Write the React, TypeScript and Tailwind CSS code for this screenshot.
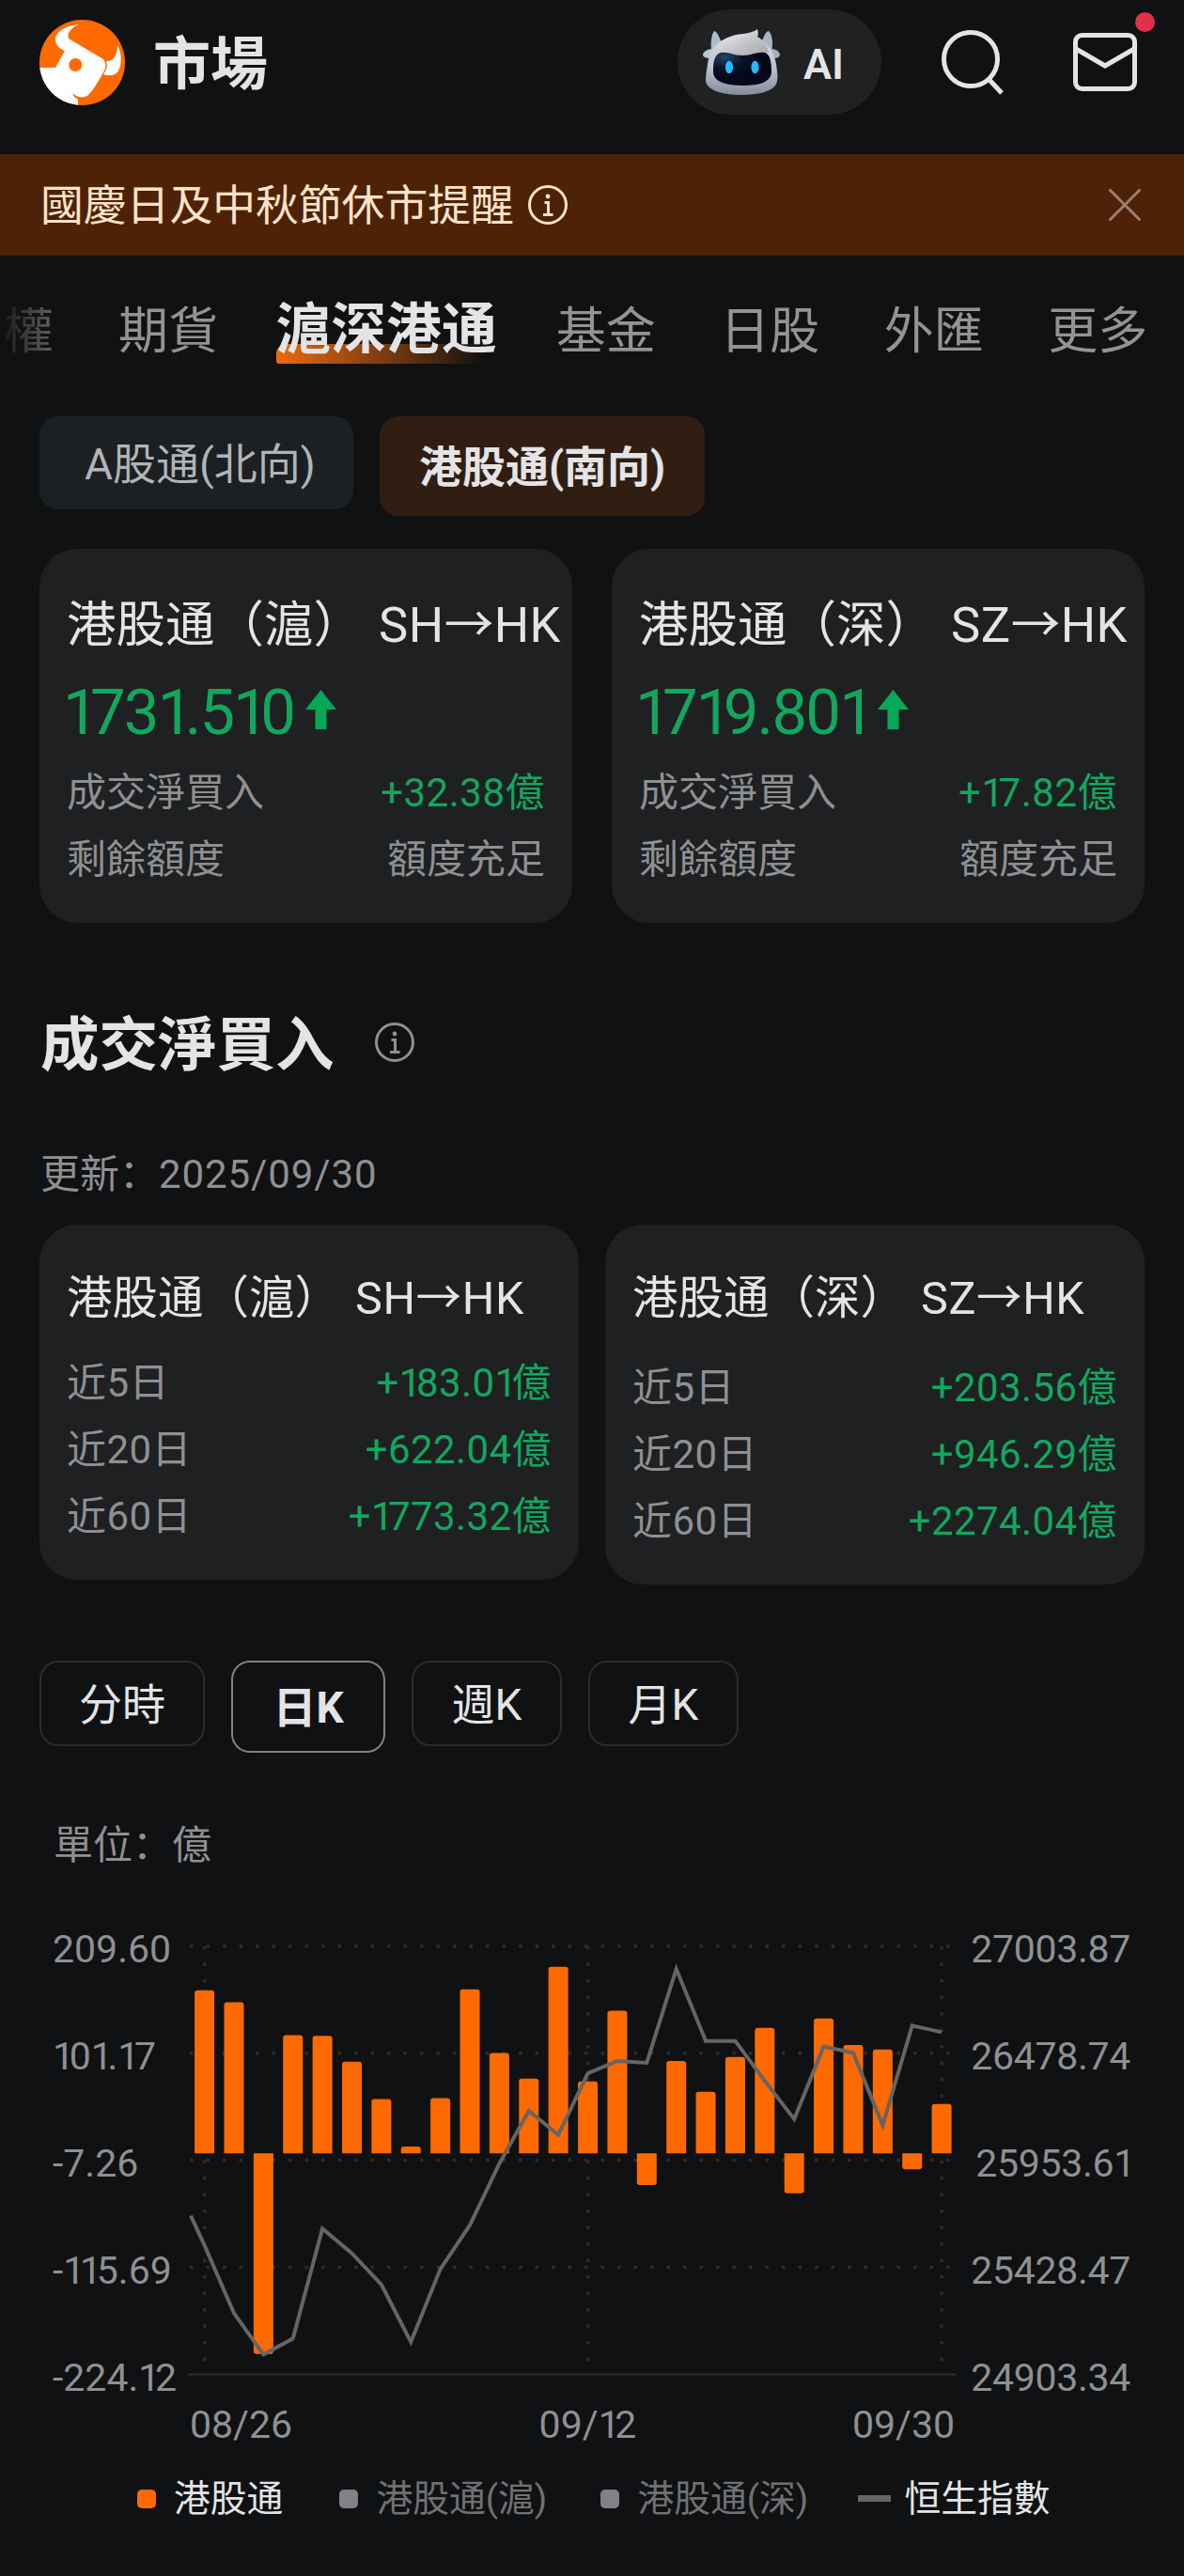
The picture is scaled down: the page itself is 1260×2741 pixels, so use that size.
import clsx from "clsx"

const tabs = ["期貨", "滬深港通", "基金", "日股", "外匯", "更多"]

const quotaCards = [
  { name: "港股通（滬）", route: "SH→HK", price: "1731.510", net: "+32.38億", quota: "額度充足" },
  { name: "港股通（深）", route: "SZ→HK", price: "1719.801", net: "+17.82億", quota: "額度充足" },
]

const netCards = [
  {
    name: "港股通（滬）",
    route: "SH→HK",
    rows: [
      ["近5日", "+183.01億"],
      ["近20日", "+622.04億"],
      ["近60日", "+1773.32億"],
    ],
  },
  {
    name: "港股通（深）",
    route: "SZ→HK",
    rows: [
      ["近5日", "+203.56億"],
      ["近20日", "+946.29億"],
      ["近60日", "+2274.04億"],
    ],
  },
]

const periods = [
  { label: "分時", width: "w-[176px]" },
  { label: "日K", width: "w-[164px]" },
  { label: "週K", width: "w-[160px]" },
  { label: "月K", width: "w-[160px]" },
]

const leftAxis = ["209.60", "101.17", "-7.26", "-115.69", "-224.12"]
const rightAxis = ["27003.87", "26478.74", "25953.61", "25428.47", "24903.34"]

const flows = [
  165.1, 153.1, -203.1, 119.7, 119, 92.9, 54.9, 7, 56, 166.1, 101.7, 75.7, 189, 72.9, 144.3, -32, 93.6, 62.3, 97.5,
  127.1, -40.5, 136.6, 109.8, 105.2, -16.2, 50,
]

const hsi = [
  25537.6, 25205.2, 25002.3, 25080.7, 25619.5, 25498.4, 25345, 25063.7, 25421.7, 25636.5, 25938.3, 26197.5, 26079.8,
  26381.6, 26441.3, 26432.7, 26893.1, 26540.1, 26540.1, 26344.1, 26156.5, 26512.9, 26482.2, 26125.8, 26615.2, 26582.8,
]

// Plot area: top grid line at y=11, axis at y=467
const PLOT_TOP = 11
const PLOT_HEIGHT = 455.8
const barX = (i: number) => 17.6 + i * 31.38
const flowY = (v: number) => PLOT_TOP + ((209.6 - v) / 433.72) * PLOT_HEIGHT
const hsiY = (v: number) => PLOT_TOP + ((27003.87 - v) / 2100.53) * PLOT_HEIGHT

// Roboto's digits are tabular, so tighten every "1" through its letter spacing
function Num({ value }: { value: string }) {
  return (
    <span className="whitespace-nowrap">
      {value.split(/(1)/).map((part, i) =>
        part === "1" ? (
          <span key={i} className="tracking-[-0.13em]">
            1
          </span>
        ) : (
          part
        ),
      )}
    </span>
  )
}

function Logo() {
  return (
    <svg viewBox="0 0 91 91" className="size-[91px]">
      <clipPath id="logo">
        <circle cx="45.5" cy="45.5" r="45.5" />
      </clipPath>
      <g clipPath="url(#logo)">
        <rect width="91" height="91" fill="#ff6a00" />
        <path
          d="M42 5C28 6 17 13 17 21C17 27 22 31 27 33L17 51H-1V92H41V85C38 83 36 81 35 78C40 83 48 84 52 80C58 74 65 62 70 52C71 48 70 45 68 42L31 20C29 14 34 8 42 5Z"
          fill="#fff"
        />
        <path d="M83 27C88 36 88 49 83 56C79 60 73 60 68 58C71 54 73 50 71 44C77 45 83 40 83 27Z" fill="#fff" />
        <circle cx="38.3" cy="48" r="7" fill="#ff6a00" />
      </g>
    </svg>
  )
}

function Robot() {
  return (
    <svg viewBox="0 0 82 70" className="h-[70px] w-[82px]">
      <defs>
        <linearGradient id="shell" x1="0" y1="0" x2="0" y2="1">
          <stop offset="0" stopColor="#d9dce0" />
          <stop offset="0.55" stopColor="#b9c2cf" />
          <stop offset="1" stopColor="#858b98" />
        </linearGradient>
        <linearGradient id="hair" x1="0" y1="0" x2="1" y2="1">
          <stop offset="0" stopColor="#f4f5f6" />
          <stop offset="0.6" stopColor="#bfc1c5" />
          <stop offset="1" stopColor="#a3a6ac" />
        </linearGradient>
        <radialGradient id="visor" cx="0.2" cy="0.15" r="0.6">
          <stop offset="0" stopColor="#24456f" />
          <stop offset="0.5" stopColor="#0b1428" />
          <stop offset="1" stopColor="#050818" />
        </radialGradient>
      </defs>
      <path d="M12 2C16 3 17 9 20 14L9 24C8 15 9 6 12 2Z" fill="#a9bccd" />
      <path d="M70 2C66 3 65 9 62 14L73 24C75 15 74 6 70 2Z" fill="#a9b4c4" />
      <path d="M0 27C1 23 6 21 11 21L8 31C4 31 0 30 0 27Z" fill="#b9c8d5" />
      <path d="M82 27C81 23 77 21 72 21L74 31C79 31 82 30 82 27Z" fill="#a4afbe" />
      <path
        d="M41 7C20 7 8 18 5 37C4 45 3 49 3 55C4 65 21 70 41 70C62 70 78 65 79 55C80 49 79 45 78 37C75 18 62 7 41 7Z"
        fill="url(#shell)"
      />
      <path
        d="M13 25C17 12 28 6 43 5C49 4 54 3 58 0C59 3 59 6 58 8C65 12 69 18 70 25C64 24 59 28 43 28C29 28 20 23 13 25Z"
        fill="url(#hair)"
      />
      <path
        d="M19 25C28 24 31 28 42 28C53 28 57 24 66 25C72 27 73 36 73 45C73 56 61 60 42 60C24 60 11 56 11 45C11 36 12 27 19 25Z"
        fill="url(#visor)"
      />
      <ellipse cx="28" cy="40.5" rx="4.1" ry="6.8" fill="#25b9ff" />
      <ellipse cx="55.5" cy="40.5" rx="4.1" ry="6.8" fill="#25b9ff" />
    </svg>
  )
}

function InfoIcon({ className }: { className?: string }) {
  return (
    <svg viewBox="0 0 42 42" fill="none" stroke="currentColor" className={clsx("size-[42px]", className)}>
      <circle cx="21" cy="21" r="19.5" strokeWidth="3" />
      <circle cx="21" cy="12" r="2.4" fill="currentColor" stroke="none" />
      <path d="M17.5 18.5H21.5V31.5M16 31.5H26.5" strokeWidth="3" />
    </svg>
  )
}

function UpArrow() {
  return (
    <svg viewBox="0 0 33 42" className="h-[42px] w-[33px]">
      <path d="M16.5 0L33 21H22.5V42H10.5V21H0Z" fill="#06a756" />
    </svg>
  )
}

function Header() {
  return (
    <header className="flex h-[164px] items-start pt-[10px] pr-[42px] pl-[42px]">
      <div className="flex h-28 flex-1 items-center">
        <Logo />
        <h1 className="ml-[30px] pt-[6px] text-[61px] leading-none font-bold">市場</h1>
      </div>
      <div className="flex h-28 items-center">
        <button className="flex h-28 w-[217px] items-center rounded-full bg-[#1f2122] pl-[27px]">
          <Robot />
          <span className="ml-[25px] pt-[5px] text-[45px] leading-none font-semibold">AI</span>
        </button>
        <svg viewBox="0 0 68 70" fill="none" stroke="#e4e4e6" strokeWidth="5" className="ml-[62px] h-[70px] w-[68px]">
          <circle cx="33" cy="32" r="28.5" />
          <path d="M52 53L66 68" />
        </svg>
        <div className="relative ml-[74px]">
          <svg viewBox="0 0 68 62" fill="none" stroke="#e4e4e6" strokeWidth="5" className="h-[62px] w-[68px]">
            <rect x="2.5" y="2.5" width="63" height="57" rx="7" />
            <path d="M3 17L34 35L65 17" />
          </svg>
          <span className="absolute -top-[22px] -right-[19px] size-[21px] rounded-full bg-[#e2304b]" />
        </div>
        <div className="w-[8px]" />
      </div>
    </header>
  )
}

function QuotaCard({ card }: { card: (typeof quotaCards)[number] }) {
  return (
    <div className="h-[398px] w-[567px] rounded-[40px] bg-[#1e2022] px-[29px] pt-[51px]">
      <div className="flex h-[60px] items-center text-[52.5px] leading-none whitespace-nowrap">
        <span>{card.name}</span>
        <span className="ml-[17px] tracking-[0.5px]">{card.route}</span>
      </div>
      <div className="mt-[27px] flex h-[70px] items-center text-[#12a75e]">
        <span className="-ml-[4px] w-[245px] pt-[3px] text-[67px] leading-none tracking-[-1.8px]">
          <Num value={card.price} />
        </span>
        <span className="ml-[13px] pb-1">
          <UpArrow />
        </span>
      </div>
      <div className="mt-[16px] flex h-[71px] items-center justify-between text-[42px] leading-none text-[#8f9092]">
        <span>成交淨買入</span>
        <span className="tracking-[0.5px] text-[#12a75e]">
          <Num value={card.net} />
        </span>
      </div>
      <div className="flex h-[71px] items-center justify-between text-[42px] leading-none text-[#8f9092]">
        <span>剩餘額度</span>
        <span>{card.quota}</span>
      </div>
    </div>
  )
}

function NetCard({ card, tall }: { card: (typeof netCards)[number]; tall?: boolean }) {
  return (
    <div className={clsx("w-[574px] rounded-[40px] bg-[#1e2022] px-[29px] pt-[49px]", tall ? "h-[383px]" : "h-[378px]")}>
      <div className="flex h-[60px] items-center text-[48.5px] leading-none whitespace-nowrap">
        <span>{card.name}</span>
        <span className="ml-[16px] tracking-[0.6px]">{card.route}</span>
      </div>
      <div className={tall ? "pt-[29px]" : "pt-[24px]"}>
        {card.rows.map(([label, value]) => (
          <div key={label} className="flex h-[71px] items-center justify-between text-[42px] leading-none text-[#8f9092]">
            <span className="tracking-[0.4px]">{label}</span>
            <span className="tracking-[0.4px] text-[#12a75e]">
              <Num value={value} />
            </span>
          </div>
        ))}
      </div>
    </div>
  )
}

function Chart() {
  const line = [[3, hsiY(25682.6)], ...hsi.map((v, i) => [barX(i), hsiY(v)])].map((p) => p.join(",")).join(" ")

  return (
    <svg viewBox="0 0 818 470" className="h-[470px] w-[818px]">
      {[0, 1, 2, 3].map((i) => (
        <line
          key={i}
          x1="2"
          x2="811"
          y1={PLOT_TOP + i * 113.8}
          y2={PLOT_TOP + i * 113.8}
          stroke="#2b2c2e"
          strokeWidth="3.5"
          strokeDasharray="3.5 14"
        />
      ))}
      {[0, 13, 25].map((i) => (
        <line
          key={i}
          x1={barX(i)}
          x2={barX(i)}
          y1={PLOT_TOP}
          y2="456"
          stroke="#2b2c2e"
          strokeWidth="3.5"
          strokeDasharray="3.5 14"
        />
      ))}
      <line x1="0" x2="818" y1="466.5" y2="466.5" stroke="#2d2e30" strokeWidth="2" />
      {flows.map((v, i) => {
        const x = barX(i) - 10.5
        const zero = flowY(0)
        const end = flowY(v)
        const r = v > 0 ? 3 : -3
        return (
          <path
            key={i}
            d={`M${x} ${zero}V${end + r}Q${x} ${end} ${x + 3} ${end}H${x + 18}Q${x + 21} ${end} ${x + 21} ${end + r}V${zero}Z`}
            fill="#ff6a00"
          />
        )
      })}
      <polyline points={line} fill="none" stroke="#656565" strokeWidth="4" />
    </svg>
  )
}

function LegendItem({ label, color, active }: { label: string; color: string; active?: boolean }) {
  return (
    <div className="flex items-center">
      <span className={clsx("size-[20px] rounded-[5px]", color)} />
      <span className={clsx("ml-[19px]", active ? "text-[#e4e4e6]" : "text-[#6f7174]")}>{label}</span>
    </div>
  )
}

export default function App() {
  return (
    <div className="h-[2741px] w-[1260px] overflow-hidden bg-[#101112] font-[Roboto,'Noto_Sans_CJK_SC',sans-serif] text-[#e4e4e6]">
      <Header />

      {/* 休市提醒 */}
      <div className="flex h-[108px] items-center bg-[#4d2207] pr-[46px] pl-[43px] text-[#fde2c8]">
        <span className="pt-[3px] text-[45.8px] leading-none">國慶日及中秋節休市提醒</span>
        <InfoIcon className="ml-[15px]" />
        <svg viewBox="0 0 34 34" stroke="#9a8172" strokeWidth="3" strokeLinecap="round" className="ml-auto size-[34px]">
          <path d="M1.5 1.5L32.5 32.5M32.5 1.5L1.5 32.5" />
        </svg>
      </div>

      <nav className="flex h-[160px] items-center pt-[2px] text-[53px] leading-none whitespace-nowrap text-[#929395]">
        <span className="mr-[69px] ml-[4px] bg-linear-to-r from-[#1c1d1e] to-[#626365] bg-clip-text text-transparent">權</span>
        {tabs.map((tab) =>
          tab === "滬深港通" ? (
            <span key={tab} className="relative mr-[63px] -ml-[7px] text-[58.8px] font-bold text-[#e4e4e6]">
              <span className="absolute bottom-[-5px] left-0 h-[21px] w-full rounded-tl-[10px] rounded-bl-[3px] bg-linear-to-r from-[#ec6a0d] to-transparent to-95%" />
              <span className="relative -top-[2px]">{tab}</span>
            </span>
          ) : (
            <span key={tab} className="mr-[68.5px]">
              {tab}
            </span>
          ),
        )}
      </nav>

      <div className="flex h-[152px] items-start gap-[28px] pt-[11px] pl-[42px] text-[46px] leading-none">
        <button className="h-[99px] w-[334px] rounded-[20px] bg-[#1c2022] pt-[2px] pl-[8px] text-[#b2b4b6]">A股通(北向)</button>
        <button className="h-[106px] w-[346px] rounded-[20px] bg-[#301e12] pt-[2px] font-bold">港股通(南向)</button>
      </div>

      <div className="flex justify-between px-[42px]">
        {quotaCards.map((card) => (
          <QuotaCard key={card.name} card={card} />
        ))}
      </div>

      <div className="mt-[96px] flex h-[66px] items-center pl-[43px]">
        <h2 className="pt-[5px] text-[62.5px] leading-none font-bold">成交淨買入</h2>
        <InfoIcon className="mb-1 ml-[43px] text-[#8f9092]" />
      </div>
      <div className="mt-[76px] flex h-[60px] items-center pl-[43px] text-[42px] leading-none text-[#8f9092]">
        更新：<span className="tracking-[0.9px]">2025/09/30</span>
      </div>

      <div className="mt-[23px] flex h-[464px] items-start justify-between px-[42px]">
        <NetCard card={netCards[0]} />
        <NetCard card={netCards[1]} tall />
      </div>

      <div className="flex h-[165px] items-start gap-[28px] pl-[42px] text-[46px] leading-none">
        {periods.map(({ label, width }) => (
          <button
            key={label}
            className={clsx(
              "rounded-[20px] border-2 pt-[2px]",
              width,
              label === "日K" ? "h-[98px] border-[#7f8183] font-bold" : "h-[91px] border-[#2a2c2f]",
            )}
          >
            {label}
          </button>
        ))}
      </div>

      <div className="flex h-[60px] items-center pt-[3px] pl-[57px] text-[42px] leading-none text-[#8f9092]">單位：億</div>

      {/* 圖表 */}
      <div className="mt-[26px] flex h-[569px] text-[41px] leading-none text-[#8f9092]">
        <div className="w-[200px] pl-[56px] whitespace-nowrap">
          {leftAxis.map((label) => (
            <div key={label} className="flex h-[113.8px] items-center">
              <Num value={label} />
            </div>
          ))}
        </div>
        <div className="w-[818px] pt-[42px]">
          <Chart />
          <div className="mt-[30px] flex justify-between pr-[2px] pl-[2px]">
            <span>08/26</span>
            <span className="ml-[33px]">
              <Num value="09/12" />
            </span>
            <span>09/30</span>
          </div>
        </div>
        <div className="flex w-[185px] flex-col items-end">
          {rightAxis.map((label) => (
            <div key={label} className="flex h-[113.8px] items-center tracking-[-0.3px]">
              <Num value={label} />
            </div>
          ))}
        </div>
      </div>

      <div className="mt-[42px] flex h-[60px] items-center pl-[146px] text-[38.8px] leading-none whitespace-nowrap">
        <LegendItem label="港股通" color="bg-[#ff6a00]" active />
        <div className="ml-[60px]">
          <LegendItem label="港股通(滬)" color="bg-[#808286]" />
        </div>
        <div className="ml-[57px]">
          <LegendItem label="港股通(深)" color="bg-[#808286]" />
        </div>
        <div className="ml-[53px] flex items-center">
          <span className="h-[7px] w-[35px] bg-[#666]" />
          <span className="ml-[14px]">恒生指數</span>
        </div>
      </div>
    </div>
  )
}
